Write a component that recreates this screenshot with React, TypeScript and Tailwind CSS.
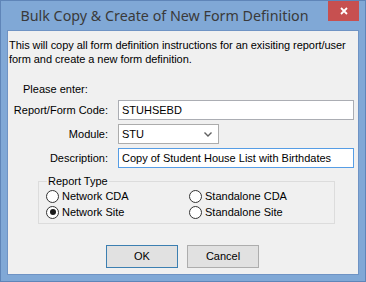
import React from 'react';

function Radio({ label, checked }: { label: string; checked?: boolean }) {
  return (
    <div className="flex items-center h-[16px]">
      <span className="w-[13px] h-[13px] rounded-full border border-[#333333] bg-white flex items-center justify-center">
        {checked && <span className="w-[6px] h-[6px] rounded-full bg-[#1a1a1a]" />}
      </span>
      <span className="ml-[3px]">{label}</span>
    </div>
  );
}

function Field({ label, children }: { label: string; children: React.ReactNode }) {
  return (
    <div className="flex items-center h-[20px]">
      <div className="w-[100px] text-right">{label}</div>
      <div className="ml-[10px]">{children}</div>
    </div>
  );
}

export default function App() {
  return (
    <div
      className="w-[366px] h-[282px] bg-[#80a8d6] border border-[#5f85b8] flex flex-col text-[11px] text-black"
      style={{ fontFamily: '"Liberation Sans", Arial, sans-serif' }}
    >
      {/* Title bar */}
      <div className="h-[29px] flex items-start">
        <div
          className="flex-1 text-center text-[14.3px] text-[#3a3a3a] leading-[29px]"
          style={{ fontFamily: '"Noto Sans", "Open Sans", sans-serif' }}
        >
          Bulk Copy &amp; Create of New Form Definition
        </div>
        <div className="w-[31px] h-[20px] bg-[#c75050] flex items-center justify-center mr-[6px]">
          <svg width="8" height="8" viewBox="0 0 8 8">
            <path d="M1 1 L7 7 M7 1 L1 7" stroke="white" strokeWidth="1.8" />
          </svg>
        </div>
      </div>

      {/* Client area */}
      <div className="mx-[6px] h-[245px] border border-[#6f93c4] bg-[#f0f0f0] flex flex-col">
        <p className="mt-[7px] pl-[1px] leading-[14px] tracking-[-0.05px] whitespace-nowrap">
          This will copy all form definition instructions for an exisiting report/user
          <br />
          form and create a new form definition.
        </p>

        <div className="mt-[16px] ml-[15px] leading-[14px]">Please enter:</div>

        <div className="mt-[4px] flex flex-col gap-[4px]">
          <Field label="Report/Form Code:">
            <div className="w-[236px] h-[20px] border border-[#abadb3] bg-white flex items-center px-[3px]">
              STUHSEBD
            </div>
          </Field>
          <Field label="Module:">
            <div className="w-[101px] h-[20px] border border-[#acacac] bg-white flex items-center justify-between px-[3px]">
              <span>STU</span>
              <svg width="8" height="5" viewBox="0 0 8 5" className="mr-[3px]">
                <path d="M0.5 0.5 L4 4 L7.5 0.5" stroke="#606060" strokeWidth="1.4" fill="none" />
              </svg>
            </div>
          </Field>
          <Field label="Description:">
            <div className="w-[236px] h-[20px] border border-[#569de5] bg-white flex items-center px-[3px]">
              Copy of Student House List with Birthdates
            </div>
          </Field>
        </div>

        <fieldset className="mt-[6px] ml-[30px] w-[297px] h-[50px] border border-[#dcdcdc] px-[7px] py-0 m-0">
          <legend className="ml-[1px] px-[1px] leading-[14px]">Report Type</legend>
          <div className="grid grid-cols-[143px_1fr]">
            <Radio label="Network CDA" />
            <Radio label="Standalone CDA" />
            <Radio label="Network Site" checked />
            <Radio label="Standalone Site" />
          </div>
        </fieldset>

        <div className="mt-[21px] ml-[98px] flex gap-[9px]">
          <div className="w-[72px] h-[23px] border border-[#3c7fb1] bg-[#e1e1e1] flex items-center justify-center">OK</div>
          <div className="w-[72px] h-[23px] border border-[#adadad] bg-[#e1e1e1] flex items-center justify-center">Cancel</div>
        </div>
      </div>
    </div>
  );
}
